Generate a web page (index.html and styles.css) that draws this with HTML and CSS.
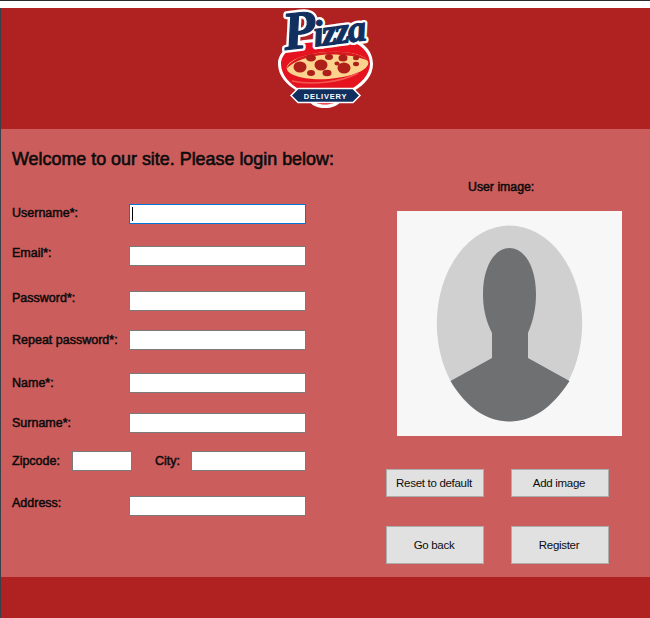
FILE: index.html
```html
<!DOCTYPE html>
<html lang="en">
<head>
<meta charset="utf-8">
<title>Pizza Delivery - Register</title>
<link rel="stylesheet" href="styles.css">
</head>
<body>
<div class="window">
  <header class="banner">
    <svg class="logo" width="110" height="110" viewBox="270 8 110 110" aria-label="Pizza Delivery logo">
      <path d="M278 64 C278 52 290 42 304 40 L345 36 C362 40 373 50 373 64 C373 76 364 85 354 91 L340 102 C335 110 315 110 310 102 L297 91 C287 85 278 76 278 64 Z" fill="#fff"/>
      <path d="M281 64 C281 54 292 45 306 43 L345 39 C360 43 370 52 370 64 C370 75 360 84 350 90 L338 100 C333 106 317 106 312 100 L300 90 C290 84 281 75 281 64 Z" fill="#e5121f"/>
      <ellipse cx="327.500" cy="65.500" rx="41" ry="13.500" transform="rotate(-4 327.500 65.500)" fill="#fbd28e"/>
      <path d="M286 69 C292 57 310 53 328 52 C346 51 362 54 369 61 C358 56 342 54 326 54.500 C308 56 294 61 286 69 Z" fill="#d61a20"/>
      <path d="M292 81 C310 85 340 83 358 73" fill="none" stroke="#f25a4f" stroke-width="1.500"/>
      <g fill="#ad1f18">
        <ellipse cx="300" cy="67" rx="6.500" ry="5.500"/>
        <ellipse cx="321" cy="65" rx="6.500" ry="5.500"/>
        <ellipse cx="344" cy="68" rx="6.500" ry="5.500"/>
        <ellipse cx="311" cy="58" rx="5" ry="3.500"/>
        <ellipse cx="329" cy="57" rx="4" ry="3"/>
        <ellipse cx="343" cy="58" rx="4.500" ry="3.500"/>
        <ellipse cx="356" cy="58" rx="3" ry="2.200"/>
        <ellipse cx="337" cy="63.500" rx="2.500" ry="2"/>
        <ellipse cx="356" cy="64" rx="3" ry="2.200"/>
        <ellipse cx="311" cy="73" rx="4" ry="3"/>
        <ellipse cx="327" cy="73" rx="4.500" ry="3.200"/>
      </g>
      <path d="M291 95.500 L298 88.500 L353 88.500 L360 95.500 L353 102.500 L298 102.500 Z" fill="#12305f" stroke="#fff" stroke-width="1.500"/>
      <text class="logo-delivery" x="325.500" y="98.500" text-anchor="middle">DELIVERY</text>
      <text class="logo-pizza" transform="rotate(-7 286 50)" x="285" y="50">P<tspan class="logo-izza" dx="-3">izza</tspan></text>
      <text class="logo-pizza logo-fill" transform="rotate(-7 286 50)" x="285" y="50">P<tspan class="logo-izza" dx="-3">izza</tspan></text>
    </svg>
  </header>
  <main class="content">
    <section class="form-col">
      <h1 class="welcome">Welcome to our site. Please login below:</h1>
      <div class="row row-user"><label class="lbl lbl-wide">Username*:</label><span class="field field-long focused"><i class="caret"></i></span></div>
      <div class="row row-email"><label class="lbl lbl-wide lbl-up">Email*:</label><span class="field field-long"></span></div>
      <div class="row row-pass"><label class="lbl lbl-wide lbl-up">Password*:</label><span class="field field-long"></span></div>
      <div class="row row-repeat"><label class="lbl lbl-wide lbl-down">Repeat password*:</label><span class="field field-long"></span></div>
      <div class="row row-name"><label class="lbl lbl-wide lbl-down">Name*:</label><span class="field field-long"></span></div>
      <div class="row row-surname"><label class="lbl lbl-wide lbl-down">Surname*:</label><span class="field field-long"></span></div>
      <div class="row row-zip"><label class="lbl lbl-zip lbl-down">Zipcode:</label><span class="field field-zip"></span><label class="lbl lbl-city lbl-down">City:</label><span class="field field-city"></span></div>
      <div class="row row-address"><label class="lbl lbl-wide lbl-up">Address:</label><span class="field field-long"></span></div>
    </section>
    <aside class="image-col">
      <div class="image-title">User image:</div>
      <div class="avatar">
        <svg width="225" height="225" viewBox="0 0 225 225">
          <ellipse cx="112.500" cy="112.500" rx="72.700" ry="98" fill="#d0d0d0"/>
          <path d="M53.500 170 L95 147 L95 122 C88 108 86 95 86 83 C86 55 98 37 112.500 37 C127 37 139 55 139 83 C139 95 137 108 131 122 L131 147 L172.500 170 C155 197 135 210.500 112.500 210.500 C90 210.500 70 197 53.500 170 Z" fill="#6f7072"/>
        </svg>
      </div>
      <div class="btn-row btn-row-small">
        <button class="btn">Reset to default</button>
        <button class="btn">Add image</button>
      </div>
      <div class="btn-row btn-row-big">
        <button class="btn btn-big">Go back</button>
        <button class="btn btn-big">Register</button>
      </div>
    </aside>
  </main>
  <footer class="footer"></footer>
</div>
</body>
</html>
```
FILE: styles.css
```css
* { box-sizing: border-box; }
html, body { margin: 0; padding: 0; background: #fff; }
body { width: 650px; height: 618px; overflow: hidden; font-family: "Liberation Sans", Arial, sans-serif; color: #0c0c0c; }
.window { width: 650px; height: 618px; display: flex; flex-direction: column; border-top: 1px solid #2b2b2b; padding-top: 7px; }
.banner, .content, .footer { border-left: 1px solid #3a4048; }
.banner { height: 121px; background: #b02121; display: flex; justify-content: center; }
.logo { display: block; margin-left: -1px; overflow: visible; }
.logo-pizza { font-family: "Liberation Serif", serif; font-style: italic; font-weight: 700; font-size: 54px; fill: #fff; stroke: #fff; stroke-width: 6px; stroke-linejoin: round; }
.logo-fill { fill: #12305f; stroke: #12305f; stroke-width: 1.2px; }
.logo-izza { font-size: 37px; letter-spacing: -1.5px; }
.logo-delivery { font-family: "Liberation Sans", sans-serif; font-weight: 700; font-size: 7.5px; fill: #fff; letter-spacing: .8px; }
.content { height: 448px; background: #cc5d5d; display: flex; }
.form-col { width: 385px; padding-left: 11px; }
.welcome { margin: 21px 0 0; font-size: 17.9px; line-height: 18px; font-weight: 400; -webkit-text-stroke: .6px #0c0c0c; white-space: nowrap; }
.row { display: flex; align-items: flex-start; height: 20px; }
.row-user { margin-top: 36px; }
.row-email { margin-top: 22px; }
.row-pass { margin-top: 25px; }
.row-repeat { margin-top: 19px; }
.row-name { margin-top: 23px; }
.row-surname { margin-top: 20px; }
.row-zip { margin-top: 18px; }
.row-address { margin-top: 25px; }
.lbl { font-size: 12.5px; line-height: 18px; -webkit-text-stroke: .5px #0c0c0c; white-space: nowrap; display: block; }
.lbl-up { margin-top: -2px; }
.lbl-down { margin-top: 1px; }
.lbl-wide { width: 117px; }
.lbl-zip { width: 60px; }
.lbl-city { width: 36px; margin-left: 23px; }
.field { display: block; height: 20px; background: #fff; border: 1px solid #7a7a7a; position: relative; }
.field-long { width: 177px; }
.field-zip { width: 60px; }
.field-city { width: 115px; }
.focused { border-color: #0078d7; }
.caret { position: absolute; left: 2px; top: 2px; width: 1px; height: 14px; background: #000; }
.image-col { width: 264px; }
.image-title { margin-top: 51px; padding-left: 82px; font-size: 12.3px; line-height: 14px; -webkit-text-stroke: .5px #0c0c0c; }
.avatar { margin: 17px 0 0 11px; width: 225px; height: 225px; background: #f7f7f7; }
.avatar svg { display: block; }
.btn-row { display: flex; gap: 27px; }
.btn-row-small { margin-top: 33px; }
.btn-row-big { margin-top: 29px; }
.btn { width: 98px; height: 28px; padding: 0 2px 0 0; background: #e1e1e1; border: 1px solid #adadad; font-family: "Liberation Sans", Arial, sans-serif; font-size: 11.5px; letter-spacing: -.3px; color: #0c0c0c; }
.btn-big { height: 38px; }
.footer { height: 41px; background: #b02121; }
```
